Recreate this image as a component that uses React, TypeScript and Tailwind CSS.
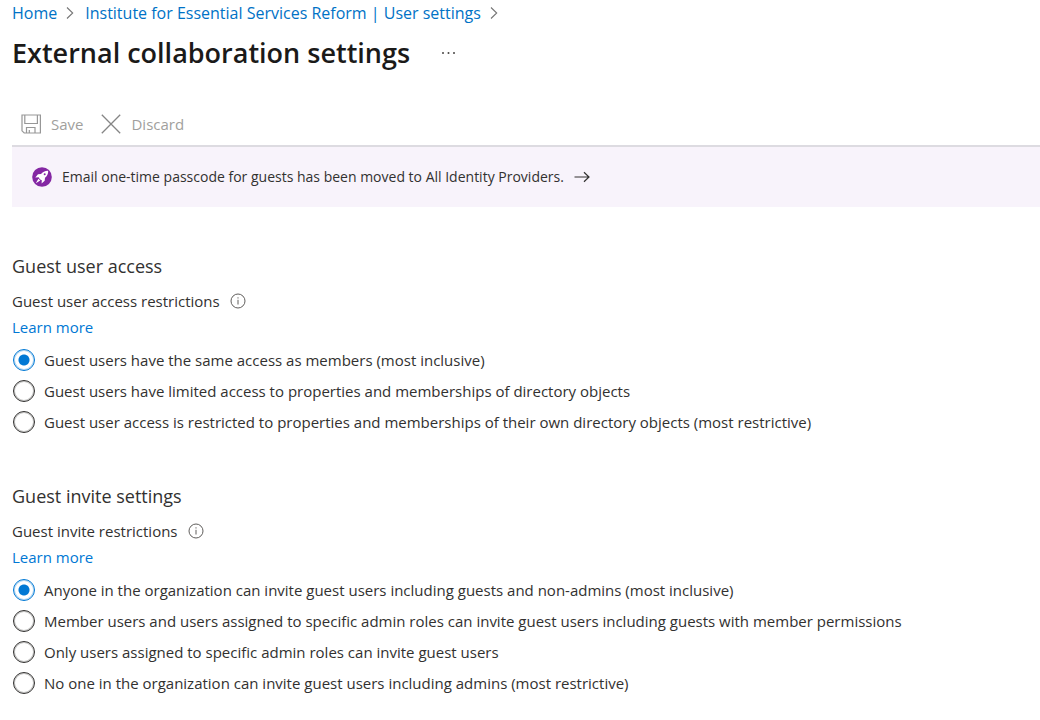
import type { ReactNode } from "react";

function Chevron() {
  return (
    <svg className="h-4 w-3 shrink-0" viewBox="0 0 12 16" fill="none" stroke="#767676" strokeWidth="1.1" aria-hidden="true">
      <path d="M2 2.5 7.7 8 2 13.5" />
    </svg>
  );
}

function SaveIcon() {
  return (
    <svg className="size-5 shrink-0" viewBox="0 0 20 20" fill="none" stroke="#979797" strokeWidth="1.2" aria-hidden="true">
      <path d="M1 1H19.4V19H3.2L1 16.8ZM3.8 1V9.5H16.4V1M5.5 19V13.5H14V19M8.3 19V16" />
    </svg>
  );
}

function DiscardIcon() {
  return (
    <svg className="size-5 shrink-0" viewBox="0 0 20 20" fill="none" stroke="#858585" strokeWidth="1.3" aria-hidden="true">
      <path d="M.8.8 19.2 19.2M19.2.8.8 19.2" />
    </svg>
  );
}

function RocketIcon() {
  return (
    <svg className="size-5 shrink-0" viewBox="0 0 20 20" aria-hidden="true">
      <circle cx="10" cy="10" r="9.8" fill="#8427a3" />
      <path
        fill="#fff"
        d="M16.2 3.7C13 3.6 10.6 4.9 9 7L6 7.3 3.3 10.5 6.7 10.3 7.3 11.5 8.6 12.7 9.8 13.3 9.6 16.5 12.7 13.8 13 10.7C15.1 9 16.3 6.8 16.2 3.7ZM6.4 11.7 3.8 16.2 8.3 13.6Z"
      />
      <circle cx="12.7" cy="7.3" r="1" fill="#8427a3" />
    </svg>
  );
}

function ArrowIcon() {
  return (
    <svg className="size-4 shrink-0" viewBox="0 0 16 16" fill="none" stroke="#323130" strokeWidth="1.2" aria-hidden="true">
      <path d="M.5 8H15M10 3.2 15 8 10 12.8" />
    </svg>
  );
}

function InfoIcon() {
  return (
    <svg className="size-4 shrink-0" viewBox="0 0 16 16" fill="none" stroke="#605e5c" aria-hidden="true">
      <circle cx="8" cy="8" r="7" />
      <path d="M8 6.8V11.5M8 4.3V5.5" />
    </svg>
  );
}

function Choice({ name, checked, children }: { name: string; checked?: boolean; children: ReactNode }) {
  return (
    <label className="flex min-h-[31px] items-center gap-2">
      <input
        type="radio"
        name={name}
        defaultChecked={checked}
        className="m-px size-[22px] shrink-0 appearance-none rounded-full border border-[#323130] bg-white inset-ring inset-ring-[#323130]/30 checked:border-[#0078d4] checked:bg-[radial-gradient(circle,#0078d4_5px,transparent_6px)] checked:inset-ring-[#0078d4]/30"
      />
      <span>{children}</span>
    </label>
  );
}

function Section({ title, label, name, options }: { title: string; label: string; name: string; options: string[] }) {
  return (
    <section>
      <h2 className="text-lg leading-7">{title}</h2>
      <fieldset className="mt-2">
        <legend className="contents">
          <span className="flex h-[26px] items-center gap-[10px]">
            {label}
            <button type="button" aria-label={`About ${label}`}>
              <InfoIcon />
            </button>
          </span>
        </legend>
        <a href="#learn-more" className="block w-fit leading-[26px] text-[#0078d4]">
          Learn more
        </a>
        <div className="mt-1">
          {options.map((option, i) => (
            <Choice key={option} name={name} checked={i === 0}>
              {option}
            </Choice>
          ))}
        </div>
      </fieldset>
    </section>
  );
}

export default function App() {
  return (
    <main className="min-h-screen overflow-x-hidden bg-white pl-3 font-['Open_Sans',sans-serif] text-[15px] leading-6 text-[#323130]">
      <nav aria-label="Breadcrumb" className="flex h-[26px] items-center gap-2 text-base text-[#0072c6]">
        <a href="#home">Home</a>
        <Chevron />
        <a href="#user-settings">Institute for Essential Services Reform | User settings</a>
        <Chevron />
      </nav>

      <header className="mt-[7px] flex items-center gap-6">
        <h1 className="text-[27px] leading-10 font-semibold text-[#1b1a19]">External collaboration settings</h1>
        <button type="button" aria-label="More options">
          <svg className="h-4 w-7" viewBox="0 0 28 16" fill="#484644" aria-hidden="true">
            <circle cx="9" cy="8" r="1" />
            <circle cx="14.5" cy="8" r="1" />
            <circle cx="20" cy="8" r="1" />
          </svg>
        </button>
      </header>

      <div role="toolbar" aria-label="Actions" className="mt-[30px] flex h-11 items-center gap-[18px] border-b-2 border-[#dddbe1] pl-[9px] text-[#a19f9d]">
        <button type="button" className="flex items-center gap-[10px]">
          <SaveIcon />
          Save
        </button>
        <button type="button" className="flex items-center gap-[10px]">
          <DiscardIcon />
          Discard
        </button>
      </div>

      <a href="#identity-providers" className="flex h-[60px] items-center gap-[10px] bg-[#f8f3fb] pl-5 text-sm">
        <RocketIcon />
        Email one-time passcode for guests has been moved to All Identity Providers.
        <ArrowIcon />
      </a>

      <div className="mt-[45px] flex flex-col gap-[45px]">
        <Section
          title="Guest user access"
          label="Guest user access restrictions"
          name="guest-access"
          options={[
            "Guest users have the same access as members (most inclusive)",
            "Guest users have limited access to properties and memberships of directory objects",
            "Guest user access is restricted to properties and memberships of their own directory objects (most restrictive)",
          ]}
        />
        <Section
          title="Guest invite settings"
          label="Guest invite restrictions"
          name="guest-invite"
          options={[
            "Anyone in the organization can invite guest users including guests and non-admins (most inclusive)",
            "Member users and users assigned to specific admin roles can invite guest users including guests with member permissions",
            "Only users assigned to specific admin roles can invite guest users",
            "No one in the organization can invite guest users including admins (most restrictive)",
          ]}
        />
      </div>
    </main>
  );
}
